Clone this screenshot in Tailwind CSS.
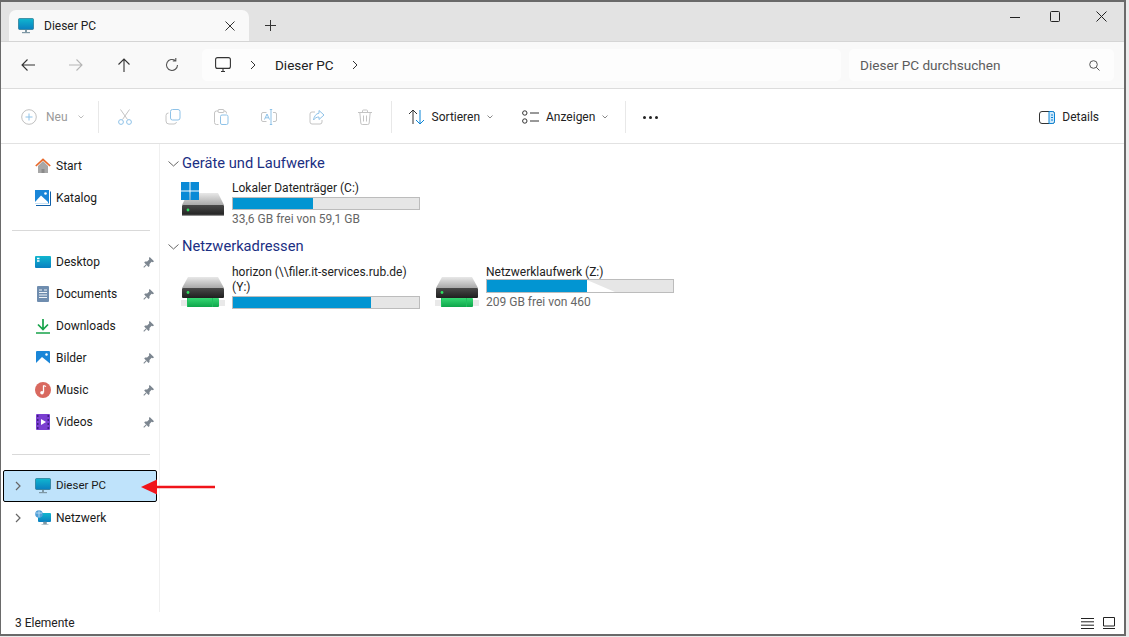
<!DOCTYPE html>
<html lang="de">
<head>
<meta charset="utf-8">
<title>Dieser PC</title>
<script src="https://cdn.jsdelivr.net/npm/@tailwindcss/browser@4"></script>
</head>
<body class="w-[1129px] h-[637px] overflow-hidden bg-[#ececec] font-['Roboto','Liberation_Sans',sans-serif] text-[12px] text-[#1a1a1a]">
<svg class="absolute w-0 h-0">
  <defs>
    <linearGradient id="screen" x1="0" y1="0" x2="0" y2="1"><stop offset="0" stop-color="#10b6cf"/><stop offset="1" stop-color="#0a7fc0"/></linearGradient>
    <linearGradient id="top" x1="0" y1="0" x2="0" y2="1"><stop offset="0" stop-color="#e8e8e8"/><stop offset="1" stop-color="#a9a9a9"/></linearGradient>
    <linearGradient id="front" x1="0" y1="0" x2="0" y2="1"><stop offset="0" stop-color="#4a4a4a"/><stop offset="1" stop-color="#1f1f1f"/></linearGradient>
    <linearGradient id="pipe" x1="0" y1="0" x2="0" y2="1"><stop offset="0" stop-color="#35d873"/><stop offset="1" stop-color="#0ea54a"/></linearGradient>
    <symbol id="monitor" viewBox="0 0 16 16">
      <rect x="0.5" y="0.5" width="15" height="11" rx="1" fill="url(#screen)" stroke="#16667f" stroke-width=".6"/>
      <rect x="7" y="12" width="2" height="2" fill="#7f98a5"/><rect x="4" y="14" width="8" height="1.2" fill="#7f98a5"/>
    </symbol>
    <symbol id="pin" viewBox="0 0 12 12">
      <path d="M7.300 0 12 4.700 10.800 5.600 9.400 5.300 7.100 7.600 7.100 9.800 6 10.800 1.300 6 2.300 4.900 4.500 4.900 6.800 2.600 6.500 1.200Z" fill="#7c8690"/>
      <path d="M3.500 8.600.8 11.300" stroke="#7c8690" stroke-width="1.100" fill="none"/>
    </symbol>
    <symbol id="drive" viewBox="0 0 44 36">
      <path d="M7 13 37 13 43 25 1 25Z" fill="url(#top)"/>
      <rect x="1" y="25" width="42" height="11" rx="1" fill="url(#front)"/>
      <rect x="1" y="34.800" width="42" height="1.200" fill="#8d8d8d"/>
      <circle cx="7" cy="30" r="1.400" fill="#2fe05f"/>
    </symbol>
    <symbol id="netdrive" viewBox="0 0 44 30">
      <path d="M7 0 37 0 43 11 1 11Z" fill="url(#top)"/>
      <rect x="1" y="11" width="42" height="10" rx="1" fill="url(#front)"/>
      <circle cx="7" cy="15.500" r="1.400" fill="#2fe05f"/>
      <rect x="0" y="23" width="44" height="6" fill="#e9e9e9"/>
      <rect x="6" y="21" width="32" height="9" rx="1" fill="url(#pipe)"/>
      <rect x="6" y="21" width="1" height="9" fill="#1fbf5f"/><rect x="31" y="21" width="1" height="9" fill="#1fbf5f"/>
    </symbol>
  </defs>
</svg>

<div class="relative w-[1126px] h-[636px] border-l border-t-2 border-r-2 border-b-2 border-[#6a6a6a] bg-white flex flex-col overflow-hidden">
  <!-- title bar with tabs -->
  <div class="h-[39px] shrink-0 bg-[#e3e3e3] flex items-end pl-[8px]">
    <div class="w-[240px] h-[31px] bg-[#f9f9f9] rounded-t-[7px] flex items-center pl-[9px] pr-[14px]">
      <svg class="w-4 h-4 shrink-0"><use href="#monitor"/></svg>
      <span class="ml-[10px] text-[12px] text-[#222]">Dieser PC</span>
      <svg class="ml-auto w-[10px] h-[10px]" viewBox="0 0 10 10"><path d="M.5.5l9 9M9.5.5l-9 9" stroke="#333" fill="none"/></svg>
    </div>
    <svg class="w-[11px] h-[11px] ml-[16px] mb-[10px]" viewBox="0 0 11 11"><path d="M5.5 0v11M0 5.5h11" stroke="#333" fill="none"/></svg>
    <div class="ml-auto self-start flex items-center pt-[5px] pr-[17px] h-[24px]">
      <svg class="w-[10px] h-[10px]" viewBox="0 0 10 10"><path d="M0 5.5h10" stroke="#222" fill="none"/></svg>
      <svg class="ml-[30px] w-[10px] h-[11px]" viewBox="0 0 10 11"><rect x=".5" y=".5" width="9" height="10" rx="1" stroke="#222" fill="none"/></svg>
      <svg class="ml-[36px] w-[11px] h-[11px]" viewBox="0 0 11 11"><path d="M.5.5l10 10M10.5.5l-10 10" stroke="#222" fill="none"/></svg>
    </div>
  </div>

  <!-- navigation row -->
  <div class="h-[48px] shrink-0 bg-[#f9f9f9] border-y border-[#dcdcdc] border-t-[#d5d5d5] flex items-center pl-[19px]">
    <div class="flex items-center gap-[32px] w-[182px]">
      <svg class="w-4 h-4" viewBox="0 0 16 16"><path d="M15 8H2M7.500 2.500 2 8l5.500 5.500" stroke="#333" fill="none" stroke-width="1.100"/></svg>
      <svg class="w-4 h-4" viewBox="0 0 16 16"><path d="M1 8h13M8.500 2.500 14 8l-5.500 5.500" stroke="#b5b5b5" fill="none" stroke-width="1.100"/></svg>
      <svg class="w-4 h-4" viewBox="0 0 16 16"><path d="M8 15V2M2.500 7.500 8 2l5.500 5.500" stroke="#333" fill="none" stroke-width="1.100"/></svg>
      <svg class="w-4 h-4" viewBox="0 0 16 16"><path d="M13.500 8A5.500 5.500 0 1 1 11.500 3.700M11.800 1v3h-3" stroke="#555" fill="none" stroke-width="1.100"/></svg>
    </div>
    <div class="w-[639px] h-[32px] bg-[#fdfdfd] rounded-[5px] flex items-center pl-[13px]">
      <svg class="w-4 h-4" viewBox="0 0 16 16"><rect x=".6" y=".6" width="14.800" height="10.800" rx="2" fill="none" stroke="#333" stroke-width="1.100"/><path d="M6 14.500h4M8 11.500v3" stroke="#333" fill="none" stroke-width="1.100"/></svg>
      <svg class="w-[6px] h-[10px] ml-[19px]" viewBox="0 0 6 10"><path d="M1 1l4 4-4 4" stroke="#333" fill="none"/></svg>
      <span class="ml-[19px] text-[13.500px] text-[#222]">Dieser PC</span>
      <svg class="w-[6px] h-[10px] ml-[18px]" viewBox="0 0 6 10"><path d="M1 1l4 4-4 4" stroke="#333" fill="none"/></svg>
    </div>
    <div class="ml-[8px] w-[265px] h-[32px] bg-[#fdfdfd] rounded-[5px] flex items-center pl-[11px] pr-[14px]">
      <span class="text-[13.600px] text-[#5c5c5c]">Dieser PC durchsuchen</span>
      <svg class="ml-auto w-[11px] h-[11px]" viewBox="0 0 11 11"><circle cx="4.500" cy="4.500" r="3.800" fill="none" stroke="#555"/><path d="M7.300 7.300 10.500 10.500" stroke="#555" fill="none"/></svg>
    </div>
  </div>

  <!-- command bar -->
  <div class="h-[55px] shrink-0 bg-white border-b border-[#e2e2e2] flex items-center pt-[2px] pl-[20px] pr-[25px]">
    <svg class="w-4 h-4" viewBox="0 0 16 16"><circle cx="8" cy="8" r="7.300" fill="none" stroke="#c0c0c0"/><path d="M8 4.500v7M4.500 8h7" stroke="#8ec2e8" fill="none"/></svg>
    <span class="ml-[9px] text-[#9a9a9a]">Neu</span>
    <svg class="ml-[10px] w-[6px] h-[4px]" viewBox="0 0 6 4"><path d="M.5.500 3 3 5.500.500" stroke="#bdbdbd" fill="none"/></svg>
    <div class="w-px h-[32px] bg-[#e8e8e8] ml-[14px]"></div>
    <div class="flex items-center gap-[32px] ml-[18px]">
      <svg class="w-4 h-4" viewBox="0 0 16 16"><path d="M3.500.500 10.500 10.500M12.500.500 5.500 10.500" stroke="#c4c4c4" fill="none"/><circle cx="4" cy="13" r="2.400" fill="none" stroke="#8ec2e8"/><circle cx="12" cy="13" r="2.400" fill="none" stroke="#8ec2e8"/></svg>
      <svg class="w-4 h-4" viewBox="0 0 16 16"><rect x="5.500" y=".5" width="9.500" height="10.500" rx="2" fill="none" stroke="#8ec2e8"/><path d="M3.500 4A2.500 2.500 0 0 0 1 6.500V12a3 3 0 0 0 3 3h5a2.500 2.500 0 0 0 2.500-2" fill="none" stroke="#c4c4c4"/></svg>
      <svg class="w-4 h-4" viewBox="0 0 16 16"><path d="M5.500 2H3.500A2 2 0 0 0 1.500 4v9.500a2 2 0 0 0 2 2h2M10.500 2h1a2 2 0 0 1 2 2v.500" fill="none" stroke="#c4c4c4"/><rect x="5" y=".5" width="6" height="3" rx="1" fill="none" stroke="#c4c4c4"/><rect x="7.500" y="6" width="7.500" height="9.500" rx="1.500" fill="none" stroke="#8ec2e8"/></svg>
      <svg class="w-4 h-4" viewBox="0 0 16 16"><path d="M5.500 3.500H2a1.500 1.500 0 0 0-1.500 1.500v6A1.500 1.500 0 0 0 2 12.500h3.500M12 3.500h2A1.500 1.500 0 0 1 15.500 5v6a1.500 1.500 0 0 1-1.500 1.500h-2" fill="none" stroke="#c4c4c4"/><path d="M8.800.5h2.400M10 .5v15M8.800 15.500h2.400" fill="none" stroke="#8ec2e8"/><path d="M3.500 10.500 6 5l2.500 5.500M4.500 8.800h3" fill="none" stroke="#8ec2e8"/></svg>
      <svg class="w-4 h-4" viewBox="0 0 16 16"><path d="M6 3H3a2 2 0 0 0-2 2v8a2 2 0 0 0 2 2h8a2 2 0 0 0 2-2v-2" fill="none" stroke="#c4c4c4"/><path d="M10 1.500 15 6l-5 4.500V8C7.500 8 6 9 4.500 11 5 7.500 7 4.500 10 4.200Z" fill="none" stroke="#8ec2e8"/></svg>
      <svg class="w-4 h-4" viewBox="0 0 16 16"><path d="M1 3.500h14M5.500 3.500V2a1 1 0 0 1 1-1h3a1 1 0 0 1 1 1v1.500M2.800 3.500 3.800 14a1.500 1.500 0 0 0 1.500 1.500h5.400a1.500 1.500 0 0 0 1.500-1.500l1-10.500M6.500 6.500v6M9.500 6.500v6" fill="none" stroke="#c4c4c4"/></svg>
    </div>
    <div class="w-px h-[32px] bg-[#e8e8e8] ml-[18px]"></div>
    <svg class="ml-[16px] w-[17px] h-[16px]" viewBox="0 0 17 16"><path d="M5 15V1M1 5l4-4 4 4" fill="none" stroke="#333"/><path d="M12 1v14M8 11l4 4 4-4" fill="none" stroke="#0a84d6"/></svg>
    <span class="ml-[7px] text-[#222]">Sortieren</span>
    <svg class="ml-[7px] w-[6px] h-[4px]" viewBox="0 0 6 4"><path d="M.5.500 3 3 5.500.500" stroke="#888" fill="none"/></svg>
    <svg class="ml-[29px] w-[17px] h-[14px]" viewBox="0 0 17 14"><circle cx="2.800" cy="3" r="2.200" fill="none" stroke="#333"/><circle cx="2.800" cy="11" r="2.200" fill="none" stroke="#333"/><path d="M8 3h9M8 11h9" stroke="#333" fill="none"/></svg>
    <span class="ml-[7px] text-[#222]">Anzeigen</span>
    <svg class="ml-[7px] w-[6px] h-[4px]" viewBox="0 0 6 4"><path d="M.5.500 3 3 5.500.500" stroke="#888" fill="none"/></svg>
    <div class="w-px h-[32px] bg-[#e8e8e8] ml-[17px]"></div>
    <div class="ml-[17px] flex gap-[3px]">
      <div class="w-[3px] h-[3px] rounded-full bg-[#222]"></div>
      <div class="w-[3px] h-[3px] rounded-full bg-[#222]"></div>
      <div class="w-[3px] h-[3px] rounded-full bg-[#222]"></div>
    </div>
    <svg class="ml-auto w-4 h-[13px]" viewBox="0 0 16 13"><rect x=".5" y=".5" width="15" height="12" rx="2.500" fill="none" stroke="#333"/><path d="M10 .5h3.500a2 2 0 0 1 2 2v8a2 2 0 0 1-2 2H10Z" fill="#cfe8fa" stroke="#0a84d6"/><path d="M12 4h2M12 6.500h2M12 9h2" stroke="#0a84d6"/></svg>
    <span class="ml-[7px] text-[#222]">Details</span>
  </div>

  <!-- sidebar + content -->
  <div class="flex flex-1 min-h-0">
    <nav class="w-[159px] shrink-0 border-r border-[#f0f0f0] pt-[6px] pl-[2px]">
      <div class="h-[32px] flex items-center pl-[32px]">
        <svg class="w-4 h-4" viewBox="0 0 16 16"><path d="M3 8v7h10V8L8 3Z" fill="#a7a7a7"/><path d="M6.500 15v-4h3v4Z" fill="#8a8a8a"/><path d="M.8 8 8 1.300 15.200 8" fill="none" stroke="#e8692a" stroke-width="1.700"/></svg>
        <span class="ml-[5px]">Start</span>
      </div>
      <div class="h-[32px] flex items-center pl-[32px]">
        <svg class="w-4 h-4" viewBox="0 0 16 16"><rect x="0" y="0" width="14" height="13.500" fill="#1a86d8"/><path d="M0 12 6 5.500l7 6.500v1.500H0Z" fill="#fff"/><circle cx="10.500" cy="3.500" r="1.300" fill="#fff"/><path d="M15.500 1.500V15.500H1" fill="none" stroke="#0f5fa8" stroke-width="1"/></svg>
        <span class="ml-[5px]">Katalog</span>
      </div>
      <div class="h-px bg-[#d9d9d9] ml-[9px] w-[138px] mt-[16px] mb-[15px]"></div>
      <div class="h-[32px] flex items-center pl-[32px]">
        <svg class="w-4 h-[12px]" viewBox="0 0 16 12"><rect width="16" height="12" rx="1" fill="url(#screen)"/><path d="M2 2.500h2.500M2 5h2.500" stroke="#fff" stroke-width="1.400"/></svg>
        <span class="ml-[5px]">Desktop</span>
        <svg class="ml-auto mr-[5px] w-[11px] h-[11px]"><use href="#pin"/></svg>
      </div>
      <div class="h-[32px] flex items-center pl-[34px]">
        <svg class="w-[12px] h-4" viewBox="0 0 12 16"><rect width="12" height="16" rx="1" fill="#6f8daf"/><path d="M2 4h3M7 4h3M2 6.500h8M2 9h8M2 11.500h8" stroke="#eef3f8"/></svg>
        <span class="ml-[7px]">Documents</span>
        <svg class="ml-auto mr-[5px] w-[11px] h-[11px]"><use href="#pin"/></svg>
      </div>
      <div class="h-[32px] flex items-center pl-[33px]">
        <svg class="w-[14px] h-[15px]" viewBox="0 0 14 15"><path d="M7 0v10M2 5.500 7 10.500l5-5M0 14h14" fill="none" stroke="#17a34a" stroke-width="1.700"/></svg>
        <span class="ml-[6px]">Downloads</span>
        <svg class="ml-auto mr-[5px] w-[11px] h-[11px]"><use href="#pin"/></svg>
      </div>
      <div class="h-[32px] flex items-center pl-[33px]">
        <svg class="w-[14px] h-[14px]" viewBox="0 0 14 14"><rect width="14" height="14" rx="1" fill="#1a86d8"/><path d="M0 12 6 6l8 6.500V14H0Z" fill="#fff"/><circle cx="10.500" cy="3.500" r="1.200" fill="#fff"/></svg>
        <span class="ml-[6px]">Bilder</span>
        <svg class="ml-auto mr-[5px] w-[11px] h-[11px]"><use href="#pin"/></svg>
      </div>
      <div class="h-[32px] flex items-center pl-[32px]">
        <svg class="w-4 h-4" viewBox="0 0 16 16"><circle cx="8" cy="8" r="8" fill="#d9695f"/><path d="M8.500 3.500v7" stroke="#fff" stroke-width="1.300"/><path d="M8.500 3.500 11 4.500" stroke="#fff" stroke-width="1.300"/><circle cx="7" cy="10.800" r="1.800" fill="#fff"/></svg>
        <span class="ml-[5px]">Music</span>
        <svg class="ml-auto mr-[5px] w-[11px] h-[11px]"><use href="#pin"/></svg>
      </div>
      <div class="h-[32px] flex items-center pl-[33px]">
        <svg class="w-[14px] h-4" viewBox="0 0 14 16"><rect width="14" height="16" rx="1" fill="#7b3fd1"/><path d="M5 5v6l5-3Z" fill="#fff"/><path d="M1 2h1.500M1 6h1.500M1 10h1.500M1 14h1.500M11.500 2H13M11.500 6H13M11.500 10H13M11.500 14H13" stroke="#2e1466" stroke-width="1.400"/></svg>
        <span class="ml-[6px]">Videos</span>
        <svg class="ml-auto mr-[5px] w-[11px] h-[11px]"><use href="#pin"/></svg>
      </div>
      <div class="h-px bg-[#d9d9d9] ml-[9px] w-[138px] mt-[16px] mb-[15px]"></div>
      <div class="h-[32px] w-[154px] bg-[#bfe3fb] border border-black rounded-[2px] flex items-center pl-[11px]">
        <svg class="w-[6px] h-[10px]" viewBox="0 0 6 10"><path d="M1 1l4 4-4 4" stroke="#666" fill="none" stroke-width="1.200"/></svg>
        <svg class="ml-[14px] w-4 h-4"><use href="#monitor"/></svg>
        <span class="ml-[5px] text-[11.500px]">Dieser PC</span>
      </div>
      <div class="h-[32px] flex items-center pl-[12px]">
        <svg class="w-[6px] h-[10px]" viewBox="0 0 6 10"><path d="M1 1l4 4-4 4" stroke="#666" fill="none" stroke-width="1.200"/></svg>
        <svg class="ml-[14px] w-4 h-4" viewBox="0 0 16 16"><rect x="3" y="3" width="13" height="9" rx="1" fill="url(#screen)"/><path d="M8.500 12h3v2h-3ZM6.500 14.500h7" fill="#7f98a5" stroke="#7f98a5" stroke-width=".5"/><circle cx="4" cy="4" r="3.800" fill="#4f9fd8"/><path d="M1 3h6M4 .5v7" stroke="#d4ecfa" stroke-width=".7"/></svg>
        <span class="ml-[5px]">Netzwerk</span>
      </div>
    </nav>

    <main class="flex-1 pt-[10px] pl-[8px] text-[#222]">
      <div class="flex items-center h-[19px]">
        <svg class="w-[11px] h-[6px]" viewBox="0 0 11 6"><path d="M.5.500 5.500 5 10.500.500" stroke="#666" fill="none"/></svg>
        <h2 class="ml-[3px] text-[14.700px] leading-[19px] text-[#1b2f83]">Geräte und Laufwerke</h2>
      </div>
      <div class="flex mt-[6px] ml-[13px]">
        <div class="relative w-[44px] h-[36px] mt-[1px]">
          <svg class="absolute left-0 top-0 w-[44px] h-[36px]"><use href="#drive"/></svg>
          <svg class="absolute left-0 top-[2px] w-[18px] h-[18px]" viewBox="0 0 18 18"><path d="M0 0h8.500v8.500H0ZM9.500 0H18v8.500H9.500ZM0 9.500h8.500V18H0ZM9.500 9.500H18V18H9.500Z" fill="#0a8ad6"/></svg>
        </div>
        <div class="ml-[7px] w-[188px] pt-[1px]">
          <div class="leading-[16px] whitespace-nowrap">Lokaler Datenträger (C:)</div>
          <div class="mt-[1px] h-[13px] bg-[#e6e6e6] border border-[#bcbcbc]"><div class="h-full bg-[#0295d2]" style="width:43%"></div></div>
          <div class="mt-[2px] leading-[14px] text-[#666]">33,6 GB frei von 59,1 GB</div>
        </div>
      </div>
      <div class="flex items-center h-[19px] mt-[11px]">
        <svg class="w-[11px] h-[6px]" viewBox="0 0 11 6"><path d="M.5.500 5.500 5 10.500.500" stroke="#666" fill="none"/></svg>
        <h2 class="ml-[3px] text-[14.700px] leading-[19px] text-[#1b2f83]">Netzwerkadressen</h2>
      </div>
      <div class="flex mt-[9px] ml-[13px]">
        <div class="flex w-[254px]">
          <svg class="mt-[12px] w-[44px] h-[30px] shrink-0"><use href="#netdrive"/></svg>
          <div class="ml-[7px] w-[188px]">
            <div class="leading-[15px] whitespace-nowrap">horizon (\\filer.it-services.rub.de)</div>
            <div class="leading-[15px]">(Y:)</div>
            <div class="mt-[1px] h-[13px] bg-[#e6e6e6] border border-[#bcbcbc]"><div class="h-full bg-[#0295d2]" style="width:74%"></div></div>
          </div>
        </div>
        <div class="flex">
          <svg class="mt-[12px] w-[44px] h-[30px] shrink-0"><use href="#netdrive"/></svg>
          <div class="ml-[7px] w-[188px]">
            <div class="leading-[14px] whitespace-nowrap">Netzwerklaufwerk (Z:)</div>
            <div class="relative h-[14px] bg-[#e6e6e6] border border-[#bcbcbc]">
              <div class="h-full bg-[#0295d2]" style="width:53.500%"></div>
              <svg class="absolute left-[100px] top-0 w-[28px] h-[12px]" viewBox="0 0 28 12"><path d="M0 0 28 12H0Z" fill="#fff"/></svg>
            </div>
            <div class="mt-[2px] leading-[14px] text-[#666]">209 GB frei von 460</div>
          </div>
        </div>
      </div>
    </main>
  </div>

  <!-- status bar -->
  <div class="h-[22px] shrink-0 bg-white flex items-center pl-[14px] pr-[9px]">
    <span class="text-[#222]">3 Elemente</span>
    <svg class="ml-auto w-[13px] h-[11px]" viewBox="0 0 13 11"><path d="M0 .5h13M0 3.800h13M0 7.200h13M0 10.500h13" stroke="#222" fill="none"/></svg>
    <svg class="ml-[9px] w-[12px] h-[12px]" viewBox="0 0 12 12"><path d="M.5 9V.5h11V9ZM0 11.500h12" stroke="#222" fill="none"/></svg>
  </div>

  <!-- red annotation arrow -->
  <svg class="absolute left-[139px] top-[476px] w-[75px] h-[18px]" viewBox="0 0 75 18"><path d="M1 9 17 1.500V16.500Z" fill="#f0141a"/><path d="M16 7.700h59v2.600H16Z" fill="#f0141a"/></svg>
</div>
</body>
</html>
